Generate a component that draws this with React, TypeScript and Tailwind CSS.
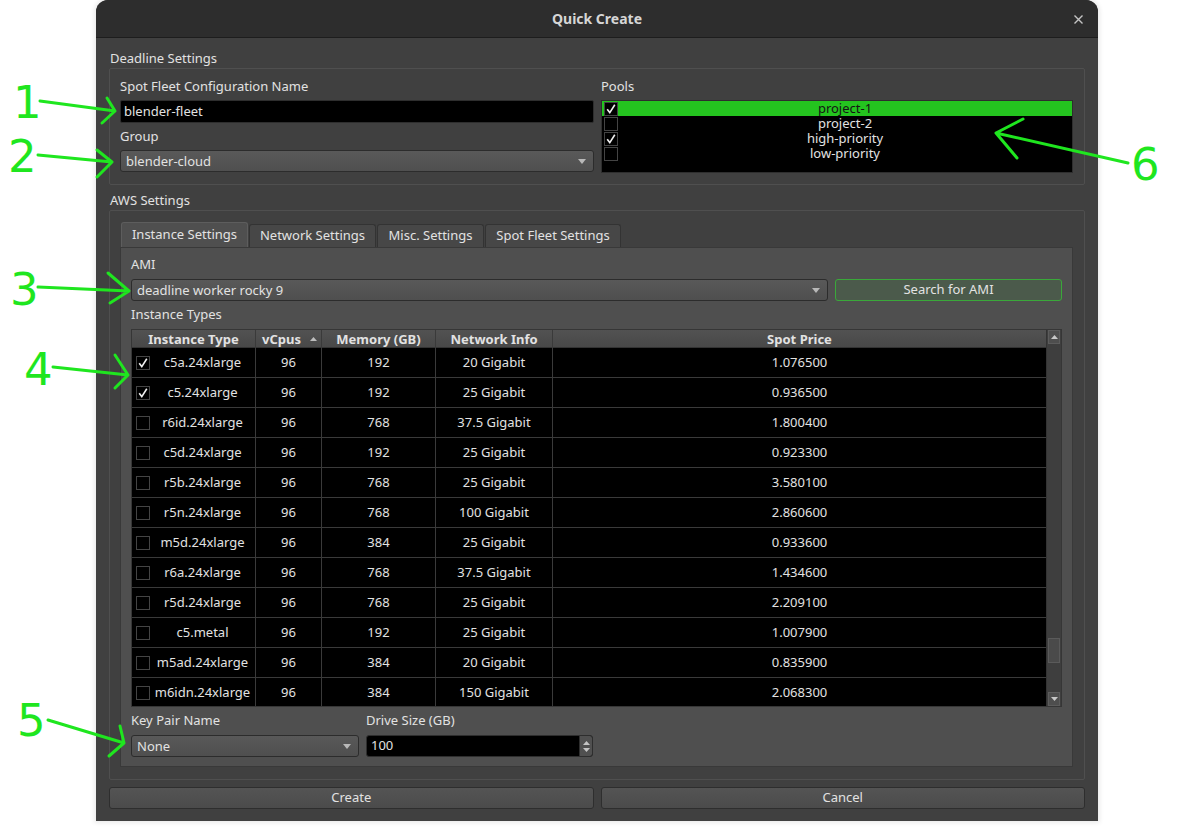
import React from "react";

const rows: [string, string, string, string, string, boolean][] = [
  ["c5a.24xlarge", "96", "192", "20 Gigabit", "1.076500", true],
  ["c5.24xlarge", "96", "192", "25 Gigabit", "0.936500", true],
  ["r6id.24xlarge", "96", "768", "37.5 Gigabit", "1.800400", false],
  ["c5d.24xlarge", "96", "192", "25 Gigabit", "0.923300", false],
  ["r5b.24xlarge", "96", "768", "25 Gigabit", "3.580100", false],
  ["r5n.24xlarge", "96", "768", "100 Gigabit", "2.860600", false],
  ["m5d.24xlarge", "96", "384", "25 Gigabit", "0.933600", false],
  ["r6a.24xlarge", "96", "768", "37.5 Gigabit", "1.434600", false],
  ["r5d.24xlarge", "96", "768", "25 Gigabit", "2.209100", false],
  ["c5.metal", "96", "192", "25 Gigabit", "1.007900", false],
  ["m5ad.24xlarge", "96", "384", "20 Gigabit", "0.835900", false],
  ["m6idn.24xlarge", "96", "384", "150 Gigabit", "2.068300", false],
];

const pools: [string, boolean][] = [
  ["project-1", true],
  ["project-2", false],
  ["high-priority", true],
  ["low-priority", false],
];

function CheckMark() {
  return (
    <svg width="12" height="12" viewBox="0 0 12 12">
      <path d="M2.2 6.2 L4.8 9.6 L9.8 1.8" stroke="#f0f0f0" strokeWidth="1.6" fill="none" />
    </svg>
  );
}

function Check({ checked }: { checked: boolean }) {
  return (
    <div className="w-[14px] h-[14px] shrink-0 border border-[#444444] bg-black flex items-center justify-center">
      {checked && <CheckMark />}
    </div>
  );
}

function DownTri() {
  return (
    <svg width="8" height="5" viewBox="0 0 8 5">
      <path d="M0 0 L8 0 L4 5 Z" fill="#b8b8b8" />
    </svg>
  );
}

function Combo({ text }: { text: string }) {
  return (
    <div className="h-[22px] w-full rounded-[3px] border border-[#2c2c2c] bg-gradient-to-b from-[#595959] to-[#4f4f4f] flex items-center pl-[5px] pr-[7px]">
      <span className="flex-1 leading-[16px]">{text}</span>
      <DownTri />
    </div>
  );
}

function Label({ children }: { children: React.ReactNode }) {
  return <div className="h-[16px] leading-[16px] whitespace-nowrap">{children}</div>;
}

export default function App() {
  return (
    <div className="relative w-[1195px] h-[830px] bg-white overflow-hidden font-['Noto_Sans',sans-serif] text-[13px] text-[#e2e2e2]">
      <div className="ml-[96px] w-[1002px] h-[821px] rounded-t-[12px] bg-[#404040] shadow-[0_0_4px_2px_rgba(0,0,0,0.08)] flex flex-col">
        {/* Title bar */}
        <div className="relative h-[38px] shrink-0 rounded-t-[12px] bg-[#2d2d2d] border-b border-[#1d1d1d] flex items-center justify-center">
          <span className="font-bold text-[14px] text-[#d6d6d6]">Quick Create</span>
          <svg className="absolute right-[15px] top-[15px]" width="9" height="9" viewBox="0 0 9 9">
            <path d="M0.5 0.5 L8.5 8.5 M8.5 0.5 L0.5 8.5" stroke="#c4c4c4" strokeWidth="1.4" />
          </svg>
        </div>

        {/* Body */}
        <div className="flex-1 px-[13px] pt-[12px] flex flex-col">
          <div className="pl-[1px]">
            <Label>Deadline Settings</Label>
          </div>
          <div className="mt-[2px] h-[117px] border border-[#4f4f4f] rounded-[2px] pt-[9px] pl-[10px] pr-[11px] flex gap-[7px]">
            <div className="w-[474px] flex flex-col">
              <Label>Spot Fleet Configuration Name</Label>
              <div className="mt-[6px] h-[23px] bg-black border border-[#2e2e2e] rounded-[2px] pl-[3px] flex items-center">
                blender-fleet
              </div>
              <div className="mt-[5px]">
                <Label>Group</Label>
              </div>
              <div className="mt-[6px]">
                <Combo text="blender-cloud" />
              </div>
            </div>
            <div className="flex-1 flex flex-col">
              <Label>Pools</Label>
              <div className="mt-[6px] h-[73px] bg-black border border-[#2e2e2e] flex flex-col">
                {pools.map(([name, checked], i) => (
                  <div
                    key={name}
                    className={
                      i === 0
                        ? "h-[15px] flex items-center bg-[#24c41f] text-[#141414] pl-[2px]"
                        : "h-[15px] flex items-center pl-[2px]"
                    }
                  >
                    <Check checked={checked} />
                    <span className="flex-1 text-center leading-[15px]">{name}</span>
                  </div>
                ))}
              </div>
            </div>
          </div>

          <div className="mt-[7px] pl-[1px]">
            <Label>AWS Settings</Label>
          </div>
          <div className="mt-[2px] h-[570px] border border-[#4f4f4f] rounded-[2px] pt-[11px] pl-[10px] pr-[11px] flex flex-col">
            {/* Tabs */}
            <div className="h-[25px] flex items-end gap-[1px] pl-[1px]">
              <div className="w-[127px] h-[25px] rounded-t-[3px] border border-b-0 border-[#5d5d5d] bg-[#4f4f4f] flex items-center justify-center">
                Instance Settings
              </div>
              <div className="w-[127px] h-[23px] rounded-t-[3px] border border-b-0 border-[#333333] bg-[#474747] flex items-center justify-center">
                Network Settings
              </div>
              <div className="w-[107px] h-[23px] rounded-t-[3px] border border-b-0 border-[#333333] bg-[#474747] flex items-center justify-center">
                Misc. Settings
              </div>
              <div className="w-[136px] h-[23px] rounded-t-[3px] border border-b-0 border-[#333333] bg-[#474747] flex items-center justify-center">
                Spot Fleet Settings
              </div>
            </div>
            {/* Pane */}
            <div className="h-[520px] bg-[#4f4f4f] border border-[#393939] pt-[8px] px-[10px] flex flex-col">
              <Label>AMI</Label>
              <div className="mt-[7px] flex gap-[7px]">
                <div className="w-[697px]">
                  <Combo text="deadline worker rocky 9" />
                </div>
                <div className="flex-1 h-[22px] rounded-[3px] border border-[#3aa83a] bg-[#4b5a4b] flex items-center justify-center">
                  Search for AMI
                </div>
              </div>
              <div className="mt-[5px]">
                <Label>Instance Types</Label>
              </div>
              {/* Table */}
              <div className="mt-[7px] h-[378px] border border-[#363636] flex overflow-hidden">
                <div className="flex-1 flex flex-col overflow-hidden">
                  <div className="h-[18px] shrink-0 grid grid-cols-[124px_66px_114px_117px_1fr] bg-gradient-to-b from-[#525252] to-[#484848] border-b border-[#333333] font-bold leading-[18px]">
                    <div className="border-r border-[#3a3a3a] text-center">Instance Type</div>
                    <div className="border-r border-[#3a3a3a] relative flex items-center pl-[6px]">
                      vCpus
                      <svg className="absolute right-[4px] top-[7px]" width="7" height="4" viewBox="0 0 7 4">
                        <path d="M0 4 L7 4 L3.5 0 Z" fill="#bdbdbd" />
                      </svg>
                    </div>
                    <div className="border-r border-[#3a3a3a] text-center">Memory (GB)</div>
                    <div className="border-r border-[#3a3a3a] text-center">Network Info</div>
                    <div className="text-center">Spot Price</div>
                  </div>
                  {rows.map(([t, v, m, n, p, c]) => (
                    <div
                      key={t}
                      className="h-[30px] shrink-0 grid grid-cols-[124px_66px_114px_117px_1fr] bg-black border-b border-[#3a3a3a]"
                    >
                      <div className="border-r border-[#3a3a3a] flex items-center pl-[4px]">
                        <Check checked={c} />
                        <span className="flex-1 text-center">{t}</span>
                      </div>
                      <div className="border-r border-[#3a3a3a] flex items-center justify-center">{v}</div>
                      <div className="border-r border-[#3a3a3a] flex items-center justify-center">{m}</div>
                      <div className="border-r border-[#3a3a3a] flex items-center justify-center">{n}</div>
                      <div className="flex items-center justify-center">{p}</div>
                    </div>
                  ))}
                </div>
                {/* Scrollbar */}
                <div className="w-[15px] shrink-0 bg-[#3e3e3e] border-l border-[#333333] flex flex-col">
                  <div className="h-[14px] mx-[1px] mt-[0px] bg-[#4e4e4e] border border-[#5c5c5c] flex items-center justify-center">
                    <svg width="7" height="4" viewBox="0 0 7 4">
                      <path d="M0 4 L7 4 L3.5 0 Z" fill="#c8c8c8" />
                    </svg>
                  </div>
                  <div className="flex-1 flex flex-col">
                    <div className="h-[294px]" />
                    <div className="h-[25px] mx-[1px] bg-[#4a4a4a] border border-[#5a5a5a]" />
                    <div className="flex-1" />
                  </div>
                  <div className="h-[14px] mx-[1px] bg-[#4e4e4e] border border-[#5c5c5c] flex items-center justify-center">
                    <svg width="7" height="4" viewBox="0 0 7 4">
                      <path d="M0 0 L7 0 L3.5 4 Z" fill="#c8c8c8" />
                    </svg>
                  </div>
                </div>
              </div>
              {/* Key pair / drive */}
              <div className="mt-[5px] flex gap-[7px]">
                <div className="w-[228px] flex flex-col">
                  <Label>Key Pair Name</Label>
                  <div className="mt-[7px]">
                    <Combo text="None" />
                  </div>
                </div>
                <div className="w-[227px] flex flex-col">
                  <Label>Drive Size (GB)</Label>
                  <div className="mt-[7px] h-[22px] bg-black border border-[#2e2e2e] rounded-[3px] flex items-center">
                    <span className="flex-1 pl-[4px]">100</span>
                    <div className="w-[13px] h-[20px] bg-[#505050] border-l border-[#2e2e2e] rounded-r-[2px] flex flex-col items-center justify-center gap-[3px]">
                      <svg width="7" height="4" viewBox="0 0 7 4">
                        <path d="M0 4 L7 4 L3.5 0 Z" fill="#c4c4c4" />
                      </svg>
                      <svg width="7" height="4" viewBox="0 0 7 4">
                        <path d="M0 0 L7 0 L3.5 4 Z" fill="#c4c4c4" />
                      </svg>
                    </div>
                  </div>
                </div>
              </div>
            </div>
          </div>

          {/* Buttons */}
          <div className="mt-[7px] flex gap-[7px]">
            <div className="flex-1 h-[22px] rounded-[3px] border border-[#2e2e2e] bg-gradient-to-b from-[#545454] to-[#4b4b4b] flex items-center justify-center">
              Create
            </div>
            <div className="flex-1 h-[22px] rounded-[3px] border border-[#2e2e2e] bg-gradient-to-b from-[#545454] to-[#4b4b4b] flex items-center justify-center">
              Cancel
            </div>
          </div>
        </div>
      </div>

      {/* Annotations */}
      <svg className="absolute left-0 top-0 pointer-events-none" width="1195" height="830" viewBox="0 0 1195 830">
        <g stroke="#1fe61f" strokeWidth="3" fill="none" strokeLinecap="round" strokeLinejoin="round">
          <path d="M40 101 L115 111 M107 98 L115 111 L102 123" />
          <path d="M38 155 L112 162 M97 150 L112 162 L97 177" />
          <path d="M38 287 L129 291 M108 273 L129 291 L110 303" />
          <path d="M53 367 L128 375 M115 355 L128 375 L115 388" />
          <path d="M48 720 L124 743 M120 726 L124 743 L109 756" />
          <path d="M1128 163 L996 133 M1023 119 L996 133 L1017 158" />
        </g>
        <g fill="#1fe61f" fontFamily="DejaVu Sans, sans-serif" fontSize="45">
          <text x="13" y="118">1</text>
          <text x="8" y="172">2</text>
          <text x="10" y="305">3</text>
          <text x="24" y="385">4</text>
          <text x="17" y="736">5</text>
          <text x="1131" y="180">6</text>
        </g>
      </svg>
    </div>
  );
}
